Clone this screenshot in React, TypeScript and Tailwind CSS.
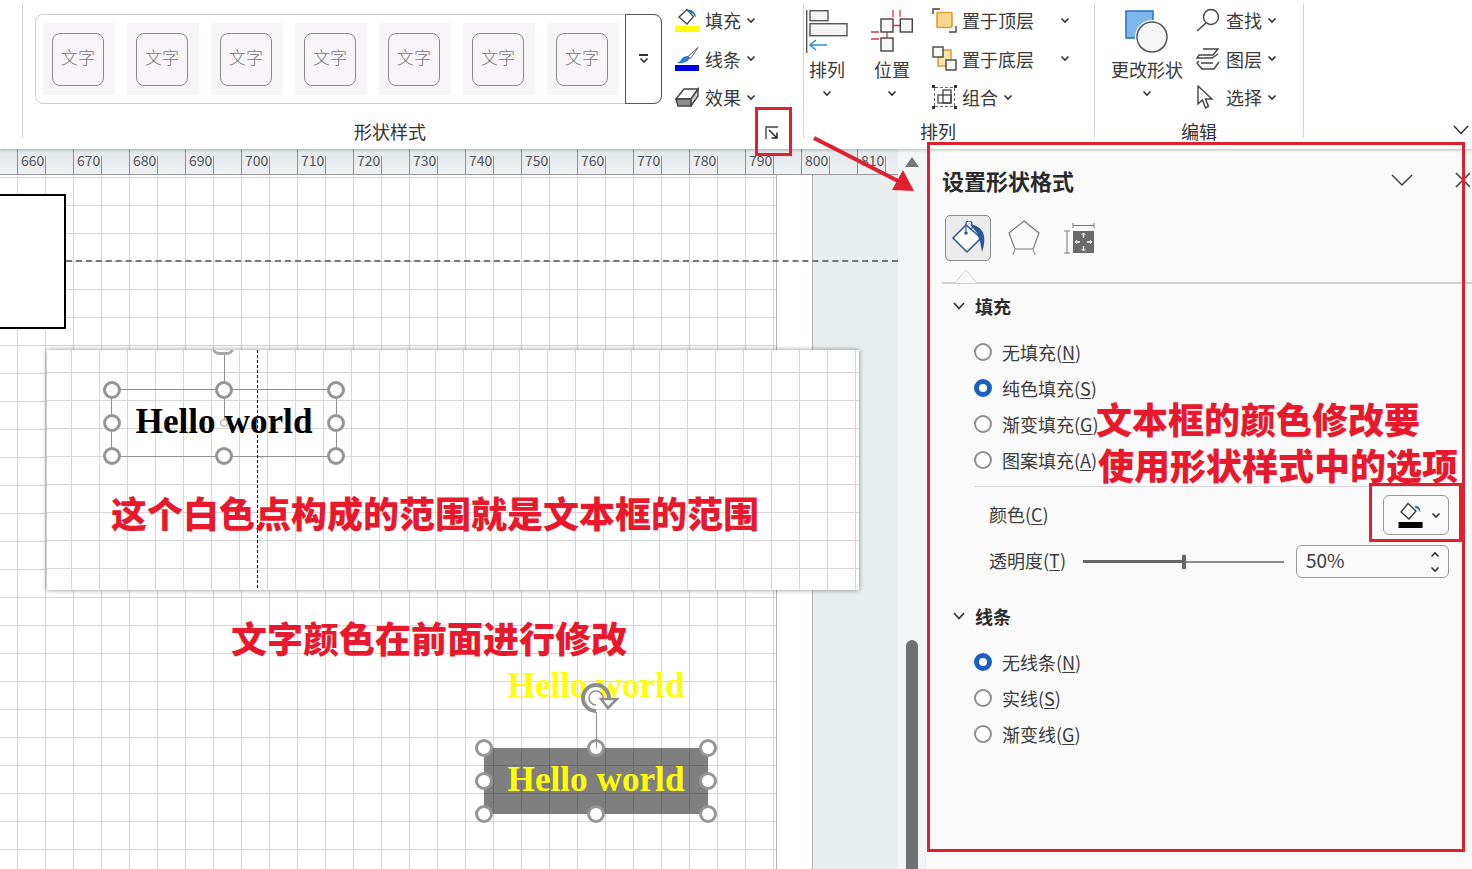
import React from "react";

const FONT = "font-['Noto_Sans_CJK_SC','Noto_Sans',sans-serif]";

function Chev({ className = "" }: { className?: string }) {
  return (
    <svg width="10" height="7" viewBox="0 0 10 7" className={className}>
      <path d="M1.5 1.5 L5 5 L8.5 1.5" fill="none" stroke="#333" strokeWidth="1.6" />
    </svg>
  );
}

function FillIcon({ bar }: { bar: string }) {
  return (
    <svg width="24" height="24" viewBox="0 0 24 24">
      <path d="M4 9 L12 1.5 L18.5 8.5 L12 16 Z" fill="#fff" stroke="#444" strokeWidth="1.3" />
      <path d="M12 1.5 Q20 1 21 9 L19.5 8 Q18 4 13 4 Z" fill="#1f78b4" />
      <rect x="0" y="18" width="24" height="6" fill={bar} />
    </svg>
  );
}
function LineIcon() {
  return (
    <svg width="24" height="24" viewBox="0 0 24 24">
      <path d="M23 0.5 L13 9.5 L15.5 11.5 Z" fill="#fff" stroke="#555" strokeWidth="1" />
      <path d="M13 9 Q8 9 6 13 Q5 15 1.5 16 Q10 17.5 15 11.5 Z" fill="#2b7cd3" />
      <rect x="0" y="18" width="24" height="6" fill="#0000e6" />
    </svg>
  );
}
function EffectIcon() {
  return (
    <svg width="24" height="20" viewBox="0 0 24 20">
      <path d="M1 12 L9 2 L23 2 L16 12 Z" fill="#fff" stroke="#444" strokeWidth="1.4" />
      <path d="M1 12 L16 12 L16 19 L3 19 Z" fill="#8d8d8d" stroke="#444" strokeWidth="1.4" />
      <path d="M16 12 L23 2 L23 9 L16 19 Z" fill="#cfcfcf" stroke="#444" strokeWidth="1.4" />
    </svg>
  );
}
function ArrangeIcon() {
  return (
    <svg width="42" height="43" viewBox="0 0 42 43">
      <path d="M0.7 0 V43" stroke="#555" strokeWidth="1.4" />
      <rect x="4" y="0.7" width="18" height="10" fill="#f4f4f4" stroke="#555" strokeWidth="1.4" />
      <rect x="4" y="13.7" width="37" height="12" fill="#f4f4f4" stroke="#555" strokeWidth="1.4" />
      <path d="M21 35 H4 M10 30 L4 35 L10 40" fill="none" stroke="#2b8fd6" strokeWidth="1.5" />
    </svg>
  );
}
function PositionIcon() {
  return (
    <svg width="42" height="43" viewBox="0 0 42 43">
      <path d="M22 0 V7 M29 0 V7 M22 15.5 H30 M0 22 H8 M0 29 H8" stroke="#e2333c" strokeWidth="1.3" />
      <path d="M16 22 V28" stroke="#e2333c" strokeWidth="1.3" />
      <rect x="10" y="9" width="12" height="13" fill="#f6f6f6" stroke="#444" strokeWidth="1.4" />
      <rect x="30" y="9" width="12" height="13" fill="#f6f6f6" stroke="#444" strokeWidth="1.4" transform="translate(-0.7 0)" />
      <rect x="10" y="28" width="12" height="13" fill="#f6f6f6" stroke="#444" strokeWidth="1.4" />
    </svg>
  );
}
function TopIcon() {
  return (
    <svg width="25" height="25" viewBox="0 0 25 25">
      <path d="M1 6 V1 H8 M24 18 V24 H17" fill="none" stroke="#444" strokeWidth="1.4" />
      <rect x="5" y="4.5" width="15" height="15" rx="1" fill="#fbd88f" stroke="#e39a2e" strokeWidth="1.6" />
    </svg>
  );
}
function BottomIcon() {
  return (
    <svg width="25" height="25" viewBox="0 0 25 25">
      <rect x="6" y="4" width="13" height="16" fill="#fbe3ae" stroke="#e39a2e" strokeWidth="1.5" />
      <rect x="1" y="1" width="10" height="10" fill="#f7f7f7" stroke="#444" strokeWidth="1.4" />
      <rect x="14" y="14" width="10" height="10" fill="#f7f7f7" stroke="#444" strokeWidth="1.4" />
    </svg>
  );
}
function GroupIcon() {
  return (
    <svg width="25" height="24" viewBox="0 0 25 24">
      <path d="M3 2.5 H22 M3 21.5 H22 M2.5 3 V21 M22.5 3 V21" stroke="#666" strokeWidth="1" strokeDasharray="3 2" fill="none" />
      <rect x="0" y="0" width="3" height="3" fill="#333" />
      <rect x="22" y="0" width="3" height="3" fill="#333" />
      <rect x="0" y="21" width="3" height="3" fill="#333" />
      <rect x="22" y="21" width="3" height="3" fill="#333" />
      <rect x="6" y="10" width="13" height="8" fill="none" stroke="#444" strokeWidth="1.3" />
      <rect x="11" y="5" width="8" height="13" fill="none" stroke="#444" strokeWidth="1.3" />
    </svg>
  );
}
function ShapeIcon() {
  return (
    <svg width="44" height="43" viewBox="0 0 44 43">
      <rect x="1" y="1" width="27" height="27" fill="#7db7ec" stroke="#2d78c6" strokeWidth="1.6" />
      <circle cx="27" cy="27" r="17" fill="#fff" />
      <circle cx="27" cy="27" r="15" fill="#f6f6f6" stroke="#555" strokeWidth="1.5" />
    </svg>
  );
}
function FindIcon() {
  return (
    <svg width="24" height="24" viewBox="0 0 24 24">
      <circle cx="15" cy="9" r="7.5" fill="none" stroke="#444" strokeWidth="1.4" />
      <path d="M10 15 L1 23" stroke="#444" strokeWidth="1.5" />
    </svg>
  );
}
function LayerIcon() {
  return (
    <svg width="24" height="22" viewBox="0 0 24 22">
      <path d="M7 1 H22 L17 7 M17 7 H3 L1 10 H16 L22 6" fill="none" stroke="#444" strokeWidth="1.4" />
      <path d="M3 13 L1 15 L6 21 H18 L23 14 M5 15 H17" fill="none" stroke="#444" strokeWidth="1.4" />
    </svg>
  );
}
function CursorIcon() {
  return (
    <svg width="18" height="24" viewBox="0 0 18 24">
      <path d="M2 1 V19 L6.5 15 L9.5 23 L12.5 21.5 L9.5 14 L16 14 Z" fill="#fff" stroke="#444" strokeWidth="1.4" />
    </svg>
  );
}

function Radio({ on }: { on?: boolean }) {
  return on ? (
    <span className="block h-[18px] w-[18px] rounded-full border-[5px] border-[#1b5fc1] bg-white" />
  ) : (
    <span className="block h-[18px] w-[18px] rounded-full border-2 border-[#8e8e8e] bg-white" />
  );
}
function RadioRow({ on, label, k }: { on?: boolean; label: string; k: string }) {
  return (
    <div className="flex h-9 items-center gap-[10px] pl-[48px] text-[18px] text-[#3c3c3c]">
      <Radio on={on} />
      <span className="whitespace-nowrap leading-none">
        {label}(<span className="underline underline-offset-2">{k}</span>)
      </span>
    </div>
  );
}
function SectionRow({ label }: { label: string }) {
  return (
    <div className="flex h-6 items-center gap-[10px] pl-[27px] text-[18px] font-bold text-[#2b2b2b]">
      <svg width="12" height="8" viewBox="0 0 12 8">
        <path d="M1 1 L6 6.5 L11 1" fill="none" stroke="#333" strokeWidth="1.7" />
      </svg>
      <span>{label}</span>
    </div>
  );
}

function SmallItem({ icon, label, chevGap = "ml-[5px]" }: { icon: React.ReactNode; label: string; chevGap?: string }) {
  return (
    <div className="flex h-[26px] items-center text-[18px] text-[#3a3a3a]">
      <span className="flex w-[30px] items-center">{icon}</span>
      <span className="whitespace-nowrap leading-none">{label}</span>
      <Chev className={chevGap} />
    </div>
  );
}
function BigItem({ icon, label, width }: { icon: React.ReactNode; label: string; width: string }) {
  return (
    <div className={`flex flex-col items-center pt-[6px] text-[18px] text-[#3a3a3a] ${width}`}>
      <div className="flex h-[43px] items-start">{icon}</div>
      <span className="mt-[4px] whitespace-nowrap leading-[24px]">{label}</span>
      <Chev className="mt-[9px]" />
    </div>
  );
}

const HANDLE = "absolute h-[18px] w-[18px] -translate-x-1/2 -translate-y-1/2 rounded-full border-[3px] border-[#969696] bg-white";
function Handles() {
  return (
    <>
      <span className={`${HANDLE} left-0 top-0`} />
      <span className={`${HANDLE} left-1/2 top-0`} />
      <span className={`${HANDLE} left-full top-0`} />
      <span className={`${HANDLE} left-0 top-1/2`} />
      <span className={`${HANDLE} left-full top-1/2`} />
      <span className={`${HANDLE} left-0 top-full`} />
      <span className={`${HANDLE} left-1/2 top-full`} />
      <span className={`${HANDLE} left-full top-full`} />
    </>
  );
}
function Rotate() {
  return (
    <svg width="38" height="32" viewBox="0 0 38 32">
      <path d="M15 28 A13 13 0 1 1 28 15" fill="none" stroke="#8e8e8e" strokeWidth="4" />
      <path d="M15 22 A7 7 0 1 1 22 15" fill="none" stroke="#8e8e8e" strokeWidth="1.5" />
      <path d="M20 16 L36 16 L27 25 Z" fill="#fff" stroke="#8e8e8e" strokeWidth="2.5" />
    </svg>
  );
}

const GRID =
  "bg-[linear-gradient(to_right,#d6d6d6_1px,transparent_1px),linear-gradient(to_bottom,#d6d6d6_1px,transparent_1px)] bg-[size:28px_28px]";
const RED = "absolute border-[3px] border-[#e1202e]";
const NOTE = "absolute whitespace-nowrap text-[36px] font-black leading-none text-[#e8192c]";
const GROUP_LABEL = "text-[18px] leading-[6px] text-[#333]";

export default function App() {
  const ruler = [660, 670, 680, 690, 700, 710, 720, 730, 740, 750, 760, 770, 780, 790, 800, 810];
  return (
    <div className={`relative flex h-[869px] w-[1472px] flex-col overflow-hidden bg-white ${FONT}`}>
      {/* Ribbon */}
      <div className="relative z-10 flex h-[149px] shrink-0 bg-white pl-[22px] shadow-[0_1px_3px_rgba(0,0,0,0.25)]">
        {/* Shape styles */}
        <div className="mt-1 flex h-[134px] w-[781px] flex-col border-l border-[#d4d4d4]">
          <div className="flex h-[124px] pl-[12px]">
            <div className="mt-[10px] flex h-[90px] w-[627px] rounded-lg border border-[#cfcfcf]">
              <div className="flex flex-1 items-center gap-3 pl-[7px]">
                {[0, 1, 2, 3, 4, 5, 6].map((i) => (
                  <div key={i} className="flex h-[72px] w-[72px] items-center justify-center bg-[#f8f5f9] pr-[2px]">
                    <div className="flex h-[53px] w-[52px] items-center justify-center rounded-lg border border-[#8d8a8e] pb-[5px] text-[17px] font-light text-[#777]">
                      文字
                    </div>
                  </div>
                ))}
              </div>
              <div className="-m-px flex w-[37px] flex-col items-center justify-center rounded-r-lg border border-[#555]">
                <span className="block h-[2px] w-[9px] bg-[#333]" />
                <Chev className="mt-[1px]" />
              </div>
            </div>
            <div className="ml-[13px] flex h-[106px] flex-col justify-between pt-[3px]">
              <SmallItem icon={<FillIcon bar="#ffff00" />} label="填充" />
              <SmallItem icon={<LineIcon />} label="线条" />
              <SmallItem icon={<EffectIcon />} label="效果" />
            </div>
          </div>
          <div className="flex h-[6px] items-center">
            <span className={`ml-[331px] ${GROUP_LABEL}`}>形状样式</span>
            <svg width="14" height="14" viewBox="0 0 14 14" className="ml-[339px] mt-[4px] shrink-0">
              <path d="M1 13 V1 H13" fill="none" stroke="#444" strokeWidth="1.4" />
              <path d="M4 4 L12 12 M12 6.5 V12 H6.5" fill="none" stroke="#222" strokeWidth="1.5" />
            </svg>
          </div>
        </div>
        {/* Arrange */}
        <div className="mt-1 flex h-[134px] w-[291px] flex-col border-l border-[#d4d4d4]">
          <div className="flex h-[124px]">
            <BigItem icon={<ArrangeIcon />} label="排列" width="w-[46px]" />
            <BigItem icon={<PositionIcon />} label="位置" width="w-[46px] ml-[19px]" />
            <div className="ml-[17px] flex h-[106px] flex-col justify-between pt-[3px]">
              <SmallItem icon={<TopIcon />} label="置于顶层" chevGap="ml-[26px]" />
              <SmallItem icon={<BottomIcon />} label="置于底层" chevGap="ml-[26px]" />
              <SmallItem icon={<GroupIcon />} label="组合" />
            </div>
          </div>
          <span className={`ml-[116px] ${GROUP_LABEL}`}>排列</span>
        </div>
        {/* Edit */}
        <div className="mt-1 flex h-[134px] w-[210px] flex-col border-x border-[#d4d4d4]">
          <div className="flex h-[124px]">
            <BigItem icon={<ShapeIcon />} label="更改形状" width="w-[72px] ml-[16px]" />
            <div className="ml-[13px] flex h-[106px] flex-col justify-between pt-[3px]">
              <SmallItem icon={<FindIcon />} label="查找" />
              <SmallItem icon={<LayerIcon />} label="图层" />
              <SmallItem icon={<CursorIcon />} label="选择" />
            </div>
          </div>
          <span className={`ml-[86px] ${GROUP_LABEL}`}>编辑</span>
        </div>
        <div className="flex flex-1 items-end justify-end pb-[14px] pr-[3px]">
          <svg width="16" height="10" viewBox="0 0 16 10">
            <path d="M1 1 L8 8.5 L15 1" fill="none" stroke="#333" strokeWidth="1.5" />
          </svg>
        </div>
      </div>

      {/* Main */}
      <div className="flex min-h-0 flex-1">
        {/* Ruler and canvas */}
        <div className="flex w-[898px] shrink-0 flex-col">
          <div className="flex h-[26px] shrink-0 overflow-hidden border-b border-[#9a9a9a] bg-[linear-gradient(to_bottom,#e3e8ea,#eef1f2)] pl-[17px] text-[14px] leading-[22px] text-[#555]">
            {ruler.map((n) => (
              <div key={n} className="flex w-[56px] shrink-0">
                <div className="w-[28px] border-l border-[#8f8f8f] pl-[3px]">{n}</div>
                <div className="mt-[7px] w-[28px] border-l border-[#8f8f8f]" />
              </div>
            ))}
          </div>
          <div className="relative flex min-h-0 flex-1 overflow-hidden">
            <div className={`w-[777px] shrink-0 border-r border-[#b4b4b4] bg-white ${GRID} bg-[position:17px_2px]`} />
            <div className="w-[35px] shrink-0 bg-white" />
            <div className="flex-1 border-l border-[#b4b4b4] bg-[#e9eeef]" />

            {/* White frame at left */}
            <div className="absolute -left-[2px] top-[19px] h-[135px] w-[68px] border-2 border-black bg-white" />
            {/* Dashed guide */}
            <div className="absolute left-[66px] right-0 top-[85px] border-t-2 border-dashed border-[#777]" />

            {/* Pasted card */}
            <div className={`absolute left-[47px] top-[175px] h-[240px] w-[812px] overflow-hidden bg-white shadow-[0_0_5px_rgba(0,0,0,0.45)] ${GRID} bg-[position:24px_22px]`}>
              <div className="absolute left-[177px] top-[0px] h-[72px] w-px bg-[#909090]" />
              <div className="absolute left-[165px] -top-[9px] h-[14px] w-[22px] rounded-full border-[3px] border-[#a8a8a8] bg-white" />
              <div className="absolute left-[64px] top-[39px] h-[68px] w-[226px] border border-[#909090]">
                <Handles />
                <div className="absolute inset-0 flex items-center justify-center pb-[2px] font-['Liberation_Serif',serif] text-[35.2px] font-bold leading-none text-black">
                  Hello world
                </div>
                <span className="absolute left-[108px] top-[29px] h-[8px] w-[8px] rounded-full border border-[#999] bg-white" />
              </div>
              <div className="absolute left-[210px] top-0 h-[238px] border-l border-dashed border-black" />
            </div>

            {/* Yellow sample */}
            <div className="absolute left-[484px] top-[573px] h-[66px] w-[224px] bg-black/50">
              <Handles />
              <div className="absolute inset-0 flex items-center justify-center pb-[2px] font-['Liberation_Serif',serif] text-[35.2px] font-bold leading-none text-[#ffff00]">
                Hello world
              </div>
              <div className="absolute bottom-full left-1/2 h-[36px] w-px bg-[#909090]" />
              <div className="absolute -top-[82px] left-1/2 -translate-x-1/2 whitespace-nowrap font-['Liberation_Serif',serif] text-[35.2px] font-bold leading-[40px] text-[#ffff00]">
                Hello world
              </div>
              <div className="absolute -top-[65px] left-[97px]">
                <Rotate />
              </div>
            </div>
          </div>
        </div>

        {/* Vertical scrollbar */}
        <div className="relative flex w-[28px] shrink-0 flex-col items-center bg-[#f3f5f6] pt-[8px]">
          <svg width="14" height="10" viewBox="0 0 14 10">
            <path d="M7 0 L14 10 H0 Z" fill="#777" />
          </svg>
          <div className="mt-[473px] w-3 flex-1 rounded-t-md bg-[#707070]" />
        </div>

        {/* Format panel */}
        <div className="relative flex w-[546px] shrink-0 flex-col bg-[#fafafa] shadow-[0_-1px_2px_rgba(0,0,0,0.1)]">
          <div className="mt-[17px] flex h-7 items-center pl-[16px]">
            <span className="text-[22px] font-bold leading-none text-[#2a2a2a]">设置形状格式</span>
            <svg width="22" height="12" viewBox="0 0 22 12" className="ml-[317px]">
              <path d="M1 1 L11 11 L21 1" fill="none" stroke="#444" strokeWidth="1.5" />
            </svg>
            <svg width="18" height="18" viewBox="0 0 18 18" className="ml-[41px]">
              <path d="M2 2 L16 16 M16 2 L2 16" stroke="#444" strokeWidth="1.6" />
            </svg>
          </div>
          <div className="ml-[19px] mt-[21px] flex h-[46px] items-center">
            <div className="flex h-[46px] w-[46px] items-center justify-center rounded-[5px] border border-[#8a8a8a] bg-[#ececec]">
              <svg width="34" height="34" viewBox="0 0 34 34">
                <path d="M2 17 L15 4 L30 17 L16 31 Z" fill="#fff" stroke="#2b579a" strokeWidth="1.5" />
                <path d="M15 10 V3 Q15 0 18 0 Q21 0 21 3 V8" fill="none" stroke="#2b579a" strokeWidth="1.2" />
                <circle cx="15" cy="12" r="1.8" fill="#2b579a" />
                <path d="M19 3 Q31 5 33 15 Q34 23 31 31 Q30 22 26 12 Z" fill="#2b579a" />
              </svg>
            </div>
            <svg width="32" height="36" viewBox="0 0 32 36" className="ml-[17px]">
              <path d="M16 1 L31 13 L25 29 H7 L1 13 Z" fill="#fafafa" stroke="#777" strokeWidth="1.2" />
              <path d="M7 29 L5 35 M25 29 L27 35" stroke="#999" strokeWidth="1.2" />
            </svg>
            <svg width="32" height="34" viewBox="0 0 32 34" className="ml-[23px]">
              <path d="M10 4.5 H31 M10 2 V7 M31 2 V7 M1 10 H7 M1 32 H7 M4 10 V32" fill="none" stroke="#777" strokeWidth="1" />
              <rect x="10" y="10" width="21" height="22" fill="#6a6a6a" />
              <path d="M20.5 12 V17 M20.5 25 V30 M12 21 H17 M24 21 H29" stroke="#fff" strokeWidth="1.4" />
              <path d="M18.5 14 L20.5 12 L22.5 14 M18.5 28 L20.5 30 L22.5 28 M14 19 L12 21 L14 23 M27 19 L29 21 L27 23" fill="none" stroke="#fff" strokeWidth="1" />
            </svg>
          </div>
          <div className="relative ml-[16px] mt-[21px] h-[2px] bg-[#d2d2d2]">
            <svg width="22" height="14" viewBox="0 0 22 14" className="absolute -top-[13px] left-[13px]">
              <path d="M0 14 L11 1 L22 14" fill="#fafafa" stroke="#d2d2d2" strokeWidth="1" />
            </svg>
          </div>
          <div className="mt-[10px]">
            <SectionRow label="填充" />
          </div>
          <div className="mt-[16px]">
            <RadioRow label="无填充" k="N" />
            <RadioRow on label="纯色填充" k="S" />
            <RadioRow label="渐变填充" k="G" />
            <RadioRow label="图案填充" k="A" />
          </div>
          <div className="ml-[48px] mr-[22px] mt-[8px] h-px bg-[#d8d8d8]" />
          <div className="ml-[63px] mr-[23px] mt-[8px] flex h-10 items-center justify-between text-[18px] text-[#3c3c3c]">
            <span className="-mt-[2px]">
              颜色(<span className="underline underline-offset-2">C</span>)
            </span>
            <div className="flex h-10 w-[66px] items-center rounded-md border border-[#9a9a9a] pl-[14px]">
              <svg width="26" height="26" viewBox="0 0 26 26">
                <path d="M3 10 L10 1.5 L18 9 L11 17 Z" fill="#fff" stroke="#333" strokeWidth="1.3" />
                <path d="M17 4 Q22 3 22.5 10 L21 9 Q20 6 17 6 Z" fill="#1f78b4" />
                <rect x="0.5" y="20" width="24" height="6" fill="#000" />
              </svg>
              <Chev className="ml-[7px]" />
            </div>
          </div>
          <div className="ml-[63px] mr-[23px] mt-[10px] flex h-[33px] items-center text-[18px] text-[#3c3c3c]">
            <span className="-mt-[3px] w-[94px] whitespace-nowrap">
              透明度(<span className="underline underline-offset-2">T</span>)
            </span>
            <div className="relative flex h-[16px] w-[201px] items-center">
              <div className="h-[3px] w-[101px] bg-[#666]" />
              <div className="h-[2px] flex-1 bg-[#8a8a8a]" />
              <div className="absolute left-[99px] top-px h-[14px] w-[4px] bg-[#666]" />
            </div>
            <div className="ml-[12px] flex h-[33px] flex-1 items-center justify-between rounded-md border border-[#9a9a9a] pl-[9px] pr-[8px]">
              <span className="-mt-[3px] text-[19px]">50%</span>
              <div className="flex flex-col gap-[8px]">
                <Chev className="rotate-180" />
                <Chev />
              </div>
            </div>
          </div>
          <div className="mt-[26px]">
            <SectionRow label="线条" />
          </div>
          <div className="mt-[16px]">
            <RadioRow on label="无线条" k="N" />
            <RadioRow label="实线" k="S" />
            <RadioRow label="渐变线" k="G" />
          </div>
        </div>
      </div>

      {/* Annotations over everything */}
      <div className={`${RED} left-[755px] top-[107px] z-20 h-[49px] w-[37px]`} />
      <div className={`${RED} left-[927px] top-[142px] z-20 h-[710px] w-[538px]`} />
      <div className={`${RED} left-[1369px] top-[483px] z-20 h-[59px] w-[93px]`} />
      <svg width="108" height="60" viewBox="0 0 108 60" className="absolute left-[810px] top-[134px] z-20">
        <path d="M4 4 L90 48" stroke="#e1202e" strokeWidth="4" />
        <path d="M104 57 L82 56 L93 36 Z" fill="#e1202e" />
      </svg>
      <div className={`${NOTE} left-[111px] top-[494px] z-20`}>这个白色点构成的范围就是文本框的范围</div>
      <div className={`${NOTE} left-[231px] top-[619px] z-20`}>文字颜色在前面进行修改</div>
      <div className={`${NOTE} left-[1096px] top-[400px] z-20`}>文本框的颜色修改要</div>
      <div className={`${NOTE} left-[1098px] top-[446px] z-20`}>使用形状样式中的选项</div>
    </div>
  );
}
